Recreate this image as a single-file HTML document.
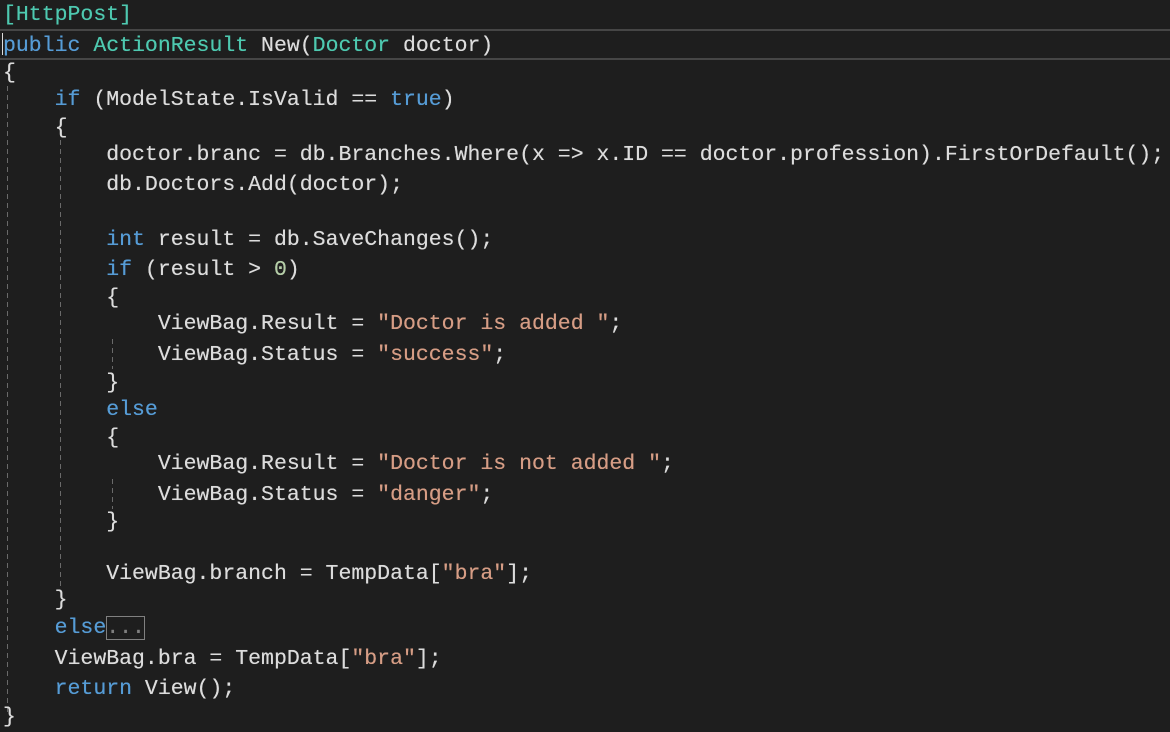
<!DOCTYPE html><html><head><style>
body{margin:0;width:1170px;height:712px;background:#1e1e1e;overflow:hidden;position:relative;font-family:"Liberation Mono",monospace;font-size:21.5px;color:#dcdcdc}
.l{position:absolute;left:3px;height:30px;line-height:30px;white-space:pre;margin-top:2px;text-shadow:0 0 0.4px currentColor}
.k{color:#569cd6}.t{color:#4ec9b0}.s{color:#d69d85}.n{color:#b5cea8}
.g{position:absolute;width:1px;background:repeating-linear-gradient(to bottom,#6a6a6a 0 5px,transparent 5px 9px)}
.hl{position:absolute;left:0;top:29px;width:1170px;height:27px;border-top:2px solid #464646;border-bottom:2px solid #464646}
</style></head><body>
<div class="hl"></div>
<div style="position:absolute;left:2px;top:33px;width:1px;height:22px;background:#dcdcdc"></div>
<div class="g" style="left:7px;top:86px;height:626px"></div>
<div class="g" style="left:60px;top:140px;height:450px"></div>
<div class="g" style="left:112px;top:339px;height:30px"></div>
<div class="g" style="left:112px;top:479px;height:30px"></div>
<div class="l" style="top:-2px"><span class="t">[HttpPost]</span></div>
<div class="l" style="top:29px"><span class="k">public</span> <span class="t">ActionResult</span> New(<span class="t">Doctor</span> doctor)</div>
<div class="l" style="top:56px">{</div>
<div class="l" style="top:83px">    <span class="k">if</span> (ModelState.IsValid == <span class="k">true</span>)</div>
<div class="l" style="top:111px">    {</div>
<div class="l" style="top:138px">        doctor.branc = db.Branches.Where(x =&gt; x.ID == doctor.profession).FirstOrDefault();</div>
<div class="l" style="top:168px">        db.Doctors.Add(doctor);</div>
<div class="l" style="top:223px">        <span class="k">int</span> result = db.SaveChanges();</div>
<div class="l" style="top:253px">        <span class="k">if</span> (result &gt; <span class="n">0</span>)</div>
<div class="l" style="top:281px">        {</div>
<div class="l" style="top:307px">            ViewBag.Result = <span class="s">"Doctor is added "</span>;</div>
<div class="l" style="top:338px">            ViewBag.Status = <span class="s">"success"</span>;</div>
<div class="l" style="top:366px">        }</div>
<div class="l" style="top:393px">        <span class="k">else</span></div>
<div class="l" style="top:421px">        {</div>
<div class="l" style="top:447px">            ViewBag.Result = <span class="s">"Doctor is not added "</span>;</div>
<div class="l" style="top:478px">            ViewBag.Status = <span class="s">"danger"</span>;</div>
<div class="l" style="top:505px">        }</div>
<div class="l" style="top:557px">        ViewBag.branch = TempData[<span class="s">"bra"</span>];</div>
<div class="l" style="top:583px">    }</div>
<div class="l" style="top:611px">    <span class="k">else</span><span style="color:#808080;outline:1px solid #808080;outline-offset:-1px">...</span></div>
<div class="l" style="top:642px">    ViewBag.bra = TempData[<span class="s">"bra"</span>];</div>
<div class="l" style="top:672px">    <span class="k">return</span> View();</div>
<div class="l" style="top:700px">}</div>
</body></html>
